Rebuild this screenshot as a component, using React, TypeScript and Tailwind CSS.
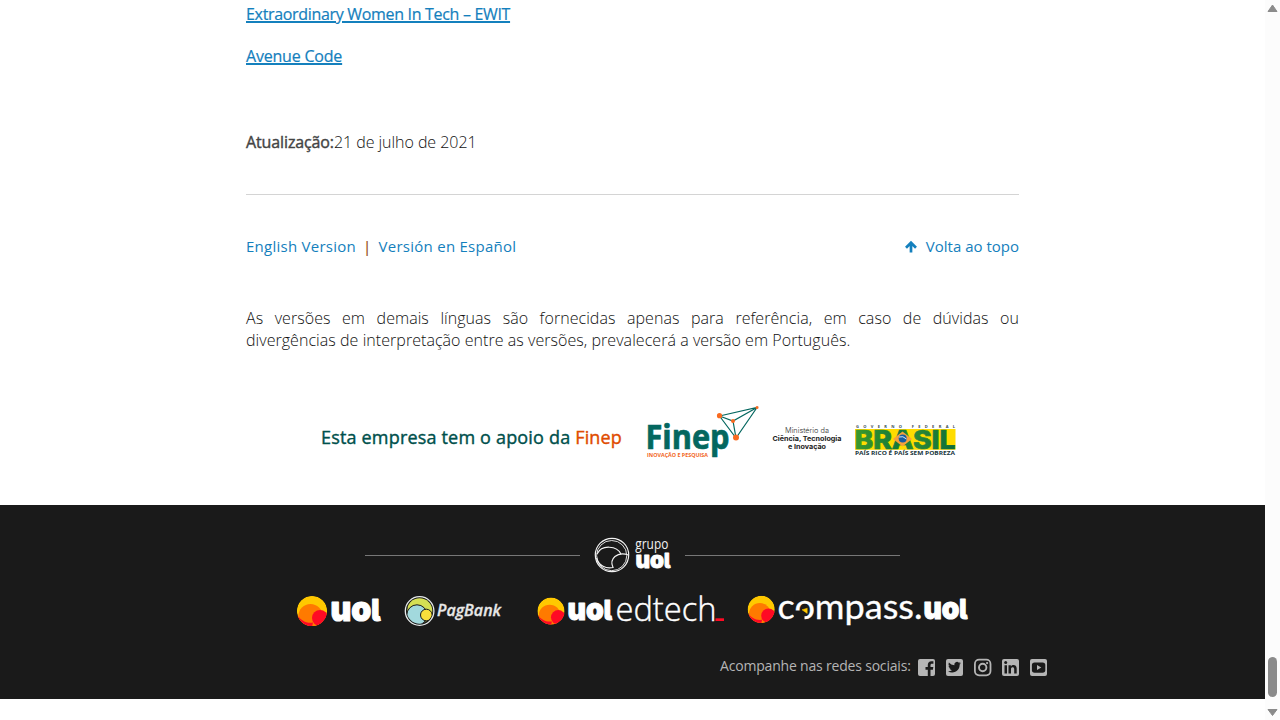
import React from "react";

const sans = "'Open Sans', 'Noto Sans', sans-serif";

function Ball({ x, y, r }: { x: number; y: number; r: number }) {
  const id = `ball-${x}-${y}`;
  return (
    <g transform={`translate(${x} ${y}) scale(${r / 15})`}>
      <clipPath id={id}>
        <circle r="15" />
      </clipPath>
      <g clipPath={`url(#${id})`}>
        <circle r="15" fill="#ffc800" />
        <circle cx="-1.5" cy="5" r="12" fill="#ff7a00" />
        <path d="M-16 2C-12 9-6 12.5 1 11.5L0 16H-16Z" fill="#ff0a24" />
        <circle cx="8" cy="7" r="8" fill="#ff0a24" />
      </g>
    </g>
  );
}

function Uol({ x, y, size, width, stroke }: { x: number; y: number; size: number; width: number; stroke: number }) {
  return (
    <text
      x={x}
      y={y}
      textLength={width}
      lengthAdjust="spacingAndGlyphs"
      fontFamily="Inter, sans-serif"
      fontWeight="900"
      fontSize={size * 1.17}
      fill="#fff"
      stroke="#fff"
      strokeWidth={stroke}
      strokeLinejoin="round"
      className="[font-feature-settings:'cv05']"
    >
      uo<tspan fontSize={size}>l</tspan>
    </text>
  );
}

function FinepLogo() {
  return (
    <svg width="114" height="56" viewBox="646 404 114 56" fontFamily={sans} className="overflow-visible">
      <text x="645.5" y="449.2" textLength="84" lengthAdjust="spacingAndGlyphs" fontSize="33.2" fontWeight="700" fill="#04675f" stroke="#04675f" strokeWidth=".7">Finep</text>
      <text x="647" y="457.3" textLength="61" lengthAdjust="spacingAndGlyphs" fontSize="5.8" fontWeight="700" fill="#f26522">INOVAÇÃO E PESQUISA</text>
      <path d="M719.5 416L757 407.5L736 438ZM719.5 416L733 421L757 407.5M733 421L736 438" fill="none" stroke="#04675f" strokeWidth="1.2" />
      <g fill="#f96a20">
        <circle cx="719.5" cy="415.7" r="2.6" />
        <circle cx="733" cy="421" r="2" />
        <circle cx="736" cy="437.6" r="3" />
        <circle cx="757" cy="407.4" r="1.5" />
      </g>
    </svg>
  );
}

function MinistryLogo() {
  return (
    <svg width="72" height="28" viewBox="771 424 72 28" fontFamily="Inter, sans-serif" textAnchor="middle" fill="#222" className="overflow-visible">
      <text x="807" y="433.2" textLength="44" lengthAdjust="spacingAndGlyphs" fontSize="7" fill="#333">Ministério da</text>
      <text x="807" y="440.8" textLength="69" lengthAdjust="spacingAndGlyphs" fontSize="6.7" fontWeight="700">Ciência, Tecnologia</text>
      <text x="807" y="448.6" textLength="38" lengthAdjust="spacingAndGlyphs" fontSize="6.7" fontWeight="700">e Inovação</text>
    </svg>
  );
}

function BrasilLogo() {
  return (
    <svg width="102" height="34" viewBox="854 423 102 34" fontFamily={sans} className="overflow-visible">
      <defs>
        <linearGradient id="brasil" x1="0" x2="1">
          <stop offset="0" stopColor="#3d9a2b" />
          <stop offset=".45" stopColor="#12773a" />
          <stop offset=".6" stopColor="#2d8a35" />
          <stop offset="1" stopColor="#0c6b3c" />
        </linearGradient>
      </defs>
      <text x="856" y="427.6" textLength="99" fontSize="4" fontWeight="700" fill="#374b55">GOVERNO FEDERAL</text>
      <rect x="855" y="429" width="100.5" height="20.8" fill="#ffdc00" />
      <text x="854.5" y="449.2" textLength="101" lengthAdjust="spacingAndGlyphs" fontFamily="Inter, sans-serif" fontSize="26.2" fontWeight="800" fill="url(#brasil)" stroke="url(#brasil)" strokeWidth=".7">BRASIL</text>
      <path d="M893 439L902.5 431.5L912 439L902.5 446.5Z" fill="#f8a13a" />
      <circle cx="902.7" cy="438.5" r="4" fill="#175aa0" />
      <path d="M899 437q4-1.5 7.5 2" stroke="#d9edf5" fill="none" />
      <text x="855" y="454.9" textLength="100" lengthAdjust="spacingAndGlyphs" fontSize="5.4" fontWeight="700" fill="#17343c">PAÍS RICO É PAÍS SEM POBREZA</text>
    </svg>
  );
}

function GrupoUol() {
  return (
    <svg width="78" height="36" viewBox="593 537 78 36" className="overflow-visible">
      <g fill="none" stroke="#f2f2f2" strokeWidth="1.2">
        <circle cx="612" cy="555" r="16.7" />
        <circle cx="611.7" cy="555.6" r="15.1" strokeWidth=".9" />
        <path d="M597 554C602 544 617 546 621 554M596.5 558C599 566 606 569 613 567.5C609 559 617 551 628.5 555" />
      </g>
      <text x="635.3" y="549.3" textLength="33" lengthAdjust="spacingAndGlyphs" fontFamily={sans} fontSize="14" fontWeight="400" fill="#f0f0f0">grupo</text>
      <Uol x={635.5} y={568.3} size={19.5} width={35} stroke={0.8} />
    </svg>
  );
}

function UolLogo() {
  return (
    <svg width="86" height="34" viewBox="296 594 86 34" className="overflow-visible">
      <Ball x={312} y={611} r={15.1} />
      <Uol x={330.5} y={621.2} size={30} width={50} stroke={1.2} />
    </svg>
  );
}

function PagBankLogo() {
  return (
    <svg width="99" height="34" viewBox="404 594 99 34" className="overflow-visible">
      <circle cx="419.6" cy="611" r="14.3" fill="#1a1a1a" stroke="#e8ecec" strokeWidth="1.3" />
      <clipPath id="pag"><circle cx="419.6" cy="611" r="12.8" /></clipPath>
      <g clipPath="url(#pag)" stroke="#1a1a1a" strokeWidth="1">
        <circle cx="420" cy="610" r="13.2" fill="#d5df54" />
        <circle cx="417" cy="615" r="10.2" fill="#a2d9dd" />
        <circle cx="426.3" cy="615" r="5.8" fill="#f8df3c" />
      </g>
      <text x="437" y="616.2" textLength="64" lengthAdjust="spacingAndGlyphs" fontFamily={sans} fontSize="15.5" fontWeight="600" fontStyle="italic" fill="#e7e7e7" stroke="#e7e7e7" strokeWidth=".3">PagBank</text>
    </svg>
  );
}

function EdtechLogo() {
  return (
    <svg width="188" height="34" viewBox="537 594 188 34" className="overflow-visible">
      <Ball x={551} y={611} r={13.6} />
      <Uol x={567.5} y={620.3} size={27} width={44.5} stroke={1.1} />
      <text x="615.5" y="621" textLength="101" lengthAdjust="spacingAndGlyphs" fontFamily={sans} fontSize="32.5" fontWeight="300" fill="#fff" stroke="#fff" strokeWidth=".4">edtech</text>
      <rect x="715.5" y="618.3" width="8.5" height="2.7" fill="#ff0a24" />
    </svg>
  );
}

function CompassLogo() {
  return (
    <svg width="222" height="36" viewBox="747 593 222 36" className="overflow-visible">
      <Ball x={761.2} y={609.3} r={13.6} />
      <text x="777.5" y="619" textLength="145" lengthAdjust="spacingAndGlyphs" fontFamily="Lato, sans-serif" fontSize="34" fontWeight="400" fill="#fff" stroke="#fff" strokeWidth=".3">compass.</text>
      <path d="M794 610.5H804.5V622H794Z" fill="#1a1a1a" />
      <path d="M802 609.8L807.2 608.2V613.4Z" fill="#ffc800" stroke="#ffc800" strokeWidth=".5" />
      <Uol x={923.5} y={618.8} size={27} width={44} stroke={1.1} />
    </svg>
  );
}

const tile = "M3 1h13a2 2 0 0 1 2 2v13a2 2 0 0 1-2 2H3a2 2 0 0 1-2-2V3a2 2 0 0 1 2-2Z";

function SocialIcons() {
  return (
    <div className="flex gap-[9px]">
      <svg width="19" height="19" viewBox="0 0 19 19">
        <path d={tile} fill="#b5b5b5" />
        <path d="M10.8 18v-6.3H8.5V8.9h2.3V7c0-2.5 1.4-3.8 3.6-3.8h2v2.5H15c-1.2 0-1.5.6-1.5 1.5v1.7h2.8l-.4 2.8h-2.4V18Z" fill="#1a1a1a" />
      </svg>
      <svg width="19" height="19" viewBox="0 0 19 19">
        <path d={tile} fill="#b5b5b5" />
        <path transform="translate(3 2.7) scale(.54)" d="M23.95 4.57a10 10 0 0 1-2.82.77 4.96 4.96 0 0 0 2.16-2.72 9.9 9.9 0 0 1-3.12 1.2 4.92 4.92 0 0 0-8.39 4.48A13.98 13.98 0 0 1 1.64 3.16a4.92 4.92 0 0 0 1.52 6.57 4.9 4.9 0 0 1-2.23-.61v.06a4.92 4.92 0 0 0 3.95 4.83 5 5 0 0 1-2.21.08 4.94 4.94 0 0 0 4.6 3.42A9.87 9.87 0 0 1 0 19.54a13.99 13.99 0 0 0 7.56 2.21c9.05 0 14-7.5 14-13.98v-.64a9.94 9.94 0 0 0 2.39-2.56Z" fill="#1a1a1a" />
      </svg>
      <svg width="19" height="19" viewBox="0 0 19 19">
        <rect x="1.9" y="1.7" width="15.6" height="15.6" rx="4.2" fill="none" stroke="#b5b5b5" strokeWidth="1.8" />
        <circle cx="9.7" cy="9.5" r="3.7" fill="none" stroke="#b5b5b5" strokeWidth="1.9" />
        <circle cx="14.1" cy="5.1" r="1.1" fill="#b5b5b5" />
      </svg>
      <svg width="19" height="19" viewBox="0 0 19 19">
        <path d={tile} fill="#b5b5b5" />
        <path d="M3.5 7.3H6v8.3H3.5ZM7.5 7.3h2.4v1.1c1.4-2.1 5.8-1.9 5.8 2.1v5.1h-2.5v-4.5c0-2.5-3.2-2.3-3.2 0v4.5H7.5Z" fill="#1a1a1a" />
        <circle cx="4.7" cy="4.6" r="1.5" fill="#1a1a1a" />
      </svg>
      <svg width="19" height="19" viewBox="0 0 19 19">
        <path d={tile} fill="#b5b5b5" />
        <rect x="2.9" y="4.4" width="13.4" height="10.3" rx="2.7" fill="#1a1a1a" />
        <path d="m8 7 4.3 2.5L8 12Z" fill="#b5b5b5" />
      </svg>
    </div>
  );
}

function Content() {
  return (
    <main className="ml-[246px] flex h-[505px] w-[773px] flex-col text-base leading-[22px] font-light text-[#111]">
      <a className="mt-[3px] self-start font-normal tracking-[-0.32px] whitespace-nowrap text-[#1480bd] underline decoration-[1.5px] [-webkit-text-stroke:0.2px]">Extraordinary Women In Tech – EWIT</a>
      <a className="mt-5 self-start font-normal tracking-[-0.2px] whitespace-nowrap text-[#1480bd] underline decoration-[1.5px] [-webkit-text-stroke:0.2px]">Avenue Code</a>
      <p className="mt-16 whitespace-nowrap">
        <b className="font-normal tracking-[-0.12px] text-[#444] [-webkit-text-stroke:0.4px]">Atualização:</b>
        <span className="tracking-[-0.05px]">21 de julho de 2021</span>
      </p>
      <hr className="mt-[41px] border-[#d4d4d4]" />
      <nav className="mt-10 flex justify-between text-[15px] font-normal whitespace-nowrap text-[#1480bd]">
        <div className="flex tracking-[0.26px]">
          <a>English Version</a>
          <span className="mx-[7px] text-[#954c16] [-webkit-text-stroke:0.2px]">|</span>
          <a>Versión en Español</a>
        </div>
        <a className="flex items-center gap-2">
          <svg width="13" height="13" viewBox="0 0 13 13">
            <path d="M6 12.4V3M1 7.7 6 2.7l5 5" fill="none" stroke="#1480bd" strokeWidth="2.7" />
          </svg>
          <span>Volta ao topo</span>
        </a>
      </nav>
      <div className="mt-[50px] text-base leading-[22px] tracking-[0.05px] whitespace-nowrap">
        <p className="[text-align-last:justify]">As versões em demais línguas são fornecidas apenas para referência, em caso de dúvidas ou</p>
        <p>divergências de interpretação entre as versões, prevalecerá a versão em Português.</p>
      </div>
      <section className="mt-[53px] ml-[75px] flex h-14 items-start">
        <p className="mt-[21px] w-[325px] text-lg leading-6 font-normal tracking-[0.18px] whitespace-nowrap text-[#00504c] [-webkit-text-stroke:0.4px]">
          Esta empresa tem o apoio da <span className="text-[#e04b00]">Finep</span>
        </p>
        <FinepLogo />
        <div className="mt-5 ml-[11px]"><MinistryLogo /></div>
        <div className="mt-[19px] ml-[11px]"><BrasilLogo /></div>
      </section>
    </main>
  );
}

function Footer() {
  return (
    <footer className="flex h-[194px] flex-col bg-[#1a1a1a]">
      <div className="mt-8 ml-[365px] flex h-9 w-[535px] items-center">
        <div className="h-px w-[215px] bg-[#777]" />
        <div className="ml-[13px] w-[78px]"><GrupoUol /></div>
        <div className="ml-[14px] h-px w-[215px] bg-[#777]" />
      </div>
      <div className="mt-5 ml-[296px] flex h-9 items-start">
        <div className="mt-px mr-[22px]"><UolLogo /></div>
        <div className="mt-px mr-[34px]"><PagBankLogo /></div>
        <div className="mt-px mr-[22px]"><EdtechLogo /></div>
        <CompassLogo />
      </div>
      <div className="mt-7 ml-[720px] flex h-5 items-center">
        <span className="mb-0.5 w-[197px] text-sm leading-5 font-normal tracking-[-0.19px] whitespace-nowrap text-[#b5b5b5]">Acompanhe nas redes sociais:</span>
        <SocialIcons />
      </div>
    </footer>
  );
}

function Scrollbar() {
  return (
    <div className="flex w-[15px] flex-col items-center bg-[#fcfcfc]">
      <svg className="mt-1" width="11" height="9" viewBox="0 0 11 9"><path d="M1 7.5 5.5 1 10 7.5Z" fill="#8b8b8b" stroke="#8b8b8b" strokeLinejoin="round" /></svg>
      <div className="mt-[644px] h-10 w-[9px] rounded-full bg-[#8b8b8b]" />
      <svg className="mt-[11px]" width="11" height="9" viewBox="0 0 11 9"><path d="M1 1.5H10L5.5 7.5Z" fill="#8b8b8b" stroke="#8b8b8b" strokeLinejoin="round" /></svg>
    </div>
  );
}

export default function App() {
  return (
    <div className="flex h-[720px] w-[1280px] overflow-hidden bg-white font-['Open_Sans','Noto_Sans',sans-serif]">
      <div className="w-[1265px]">
        <Content />
        <Footer />
      </div>
      <Scrollbar />
    </div>
  );
}
